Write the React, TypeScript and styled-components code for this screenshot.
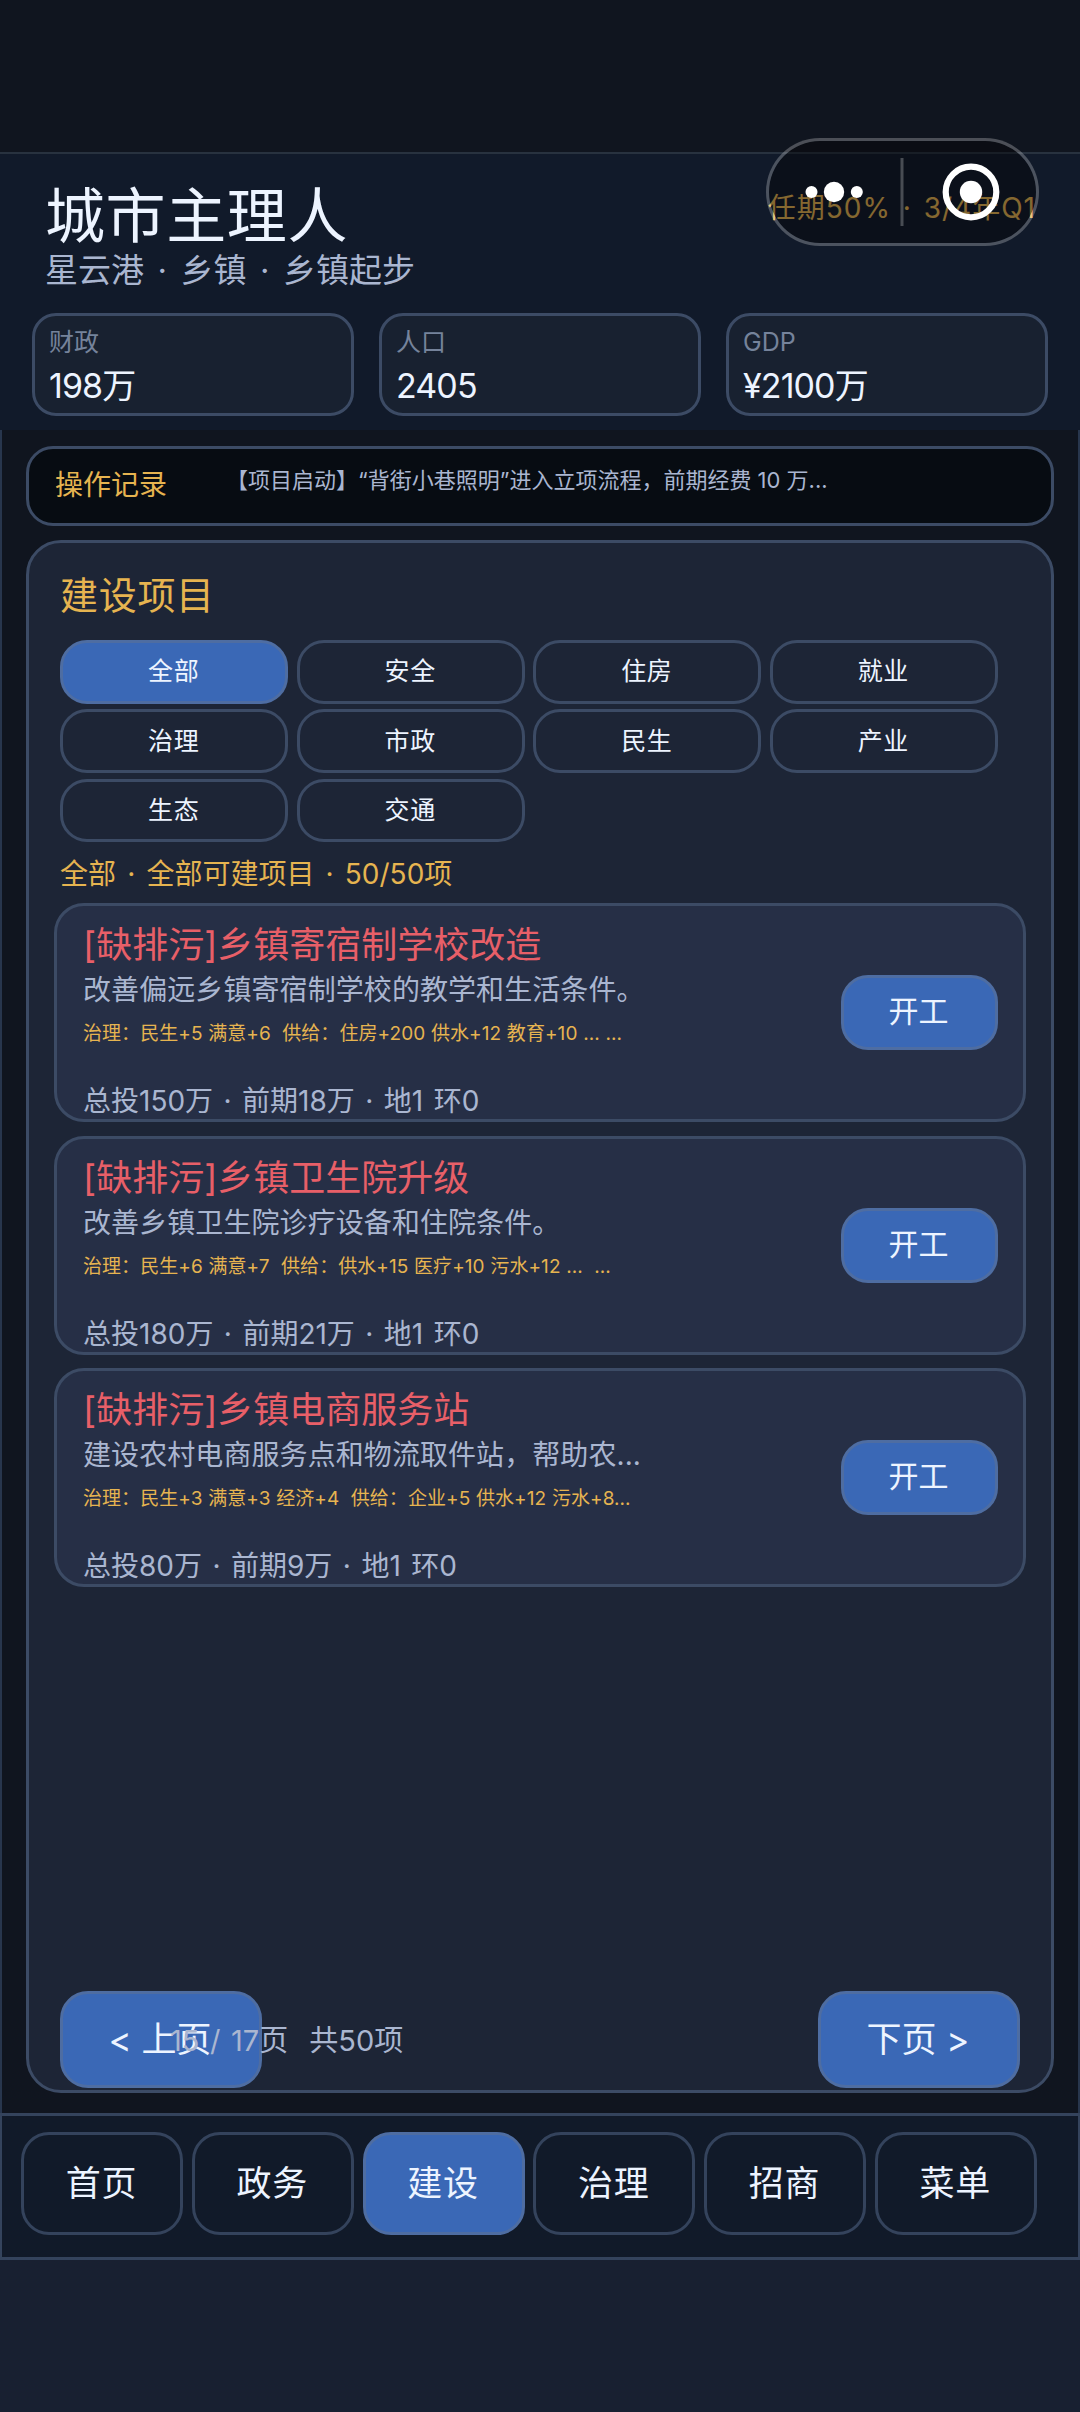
import React from 'react';
import styled, { createGlobalStyle } from 'styled-components';

const color = {
  line: '#3c4b65',
  faintLine: '#28323f',
  blueLine: '#4e6da2',
  gold: '#e6b450',
  text: '#edf4ff',
  soft: '#aab6d0',
  mute: '#75839b',
  red: '#e85f68',
  blue: '#3a68b6',
};

const GlobalStyle = createGlobalStyle`
  html, body { margin: 0; padding: 0; background: #182031; }
  *, *::before, *::after { box-sizing: border-box; }
  body, button { font-family: Inter, "Noto Sans CJK SC", sans-serif; font-weight: 400; }
  button { margin: 0; padding: 0; cursor: pointer; }
`;

const Screen = styled.div`
  position: relative;
  width: 1080px;
  height: 2412px;
  display: flex;
  flex-direction: column;
  overflow: hidden;
  background: #182031;
`;

const StatusArea = styled.div`
  flex: none;
  height: 152px;
  background: #10151f;
`;

const Header = styled.header`
  flex: none;
  height: 278px;
  border-top: 2px solid ${color.faintLine};
  background: #111a2a;
  padding: 31px 32px 0;
  display: flex;
  flex-direction: column;
`;

const HeaderTop = styled.div`
  display: flex;
  justify-content: space-between;
  height: 128px;
  padding: 0 12px 0 13px;
`;

const Text = styled.div<{ $size: number; $lh: number; $c?: string; $ls?: number; $ws?: number }>`
  font-size: ${p => p.$size}px;
  line-height: ${p => p.$lh}px;
  color: ${p => p.$c ?? color.text};
  letter-spacing: ${p => p.$ls ?? 0}px;
  word-spacing: ${p => p.$ws ?? 0}px;
  white-space: pre;
`;

const Heading = styled.div`
  display: flex;
  flex-direction: column;
  padding-top: 1px;
  gap: 6px;
`;

const Term = styled.div`
  padding-top: 7px;
`;

const Stats = styled.div`
  display: grid;
  grid-template-columns: repeat(3, 322px);
  justify-content: space-between;
`;

const StatCard = styled.div`
  height: 103px;
  border: 3px solid ${color.line};
  border-radius: 24px;
  background: #182130;
  padding: 13px 14px 0;
  display: flex;
  flex-direction: column;
  gap: 13px;
`;

const Capsule = styled.div`
  position: absolute;
  left: 766px;
  top: 138px;
  width: 273px;
  height: 108px;
  border-radius: 54px;
  border: 3px solid rgba(255, 255, 255, 0.25);
  background: rgba(4, 4, 8, 0.43);
  background-clip: padding-box;
  display: flex;
  align-items: center;
`;

const CapsuleIcons = styled.svg`
  display: block;
  width: 267px;
  height: 102px;
`;

const Body = styled.main`
  flex: none;
  height: 1683px;
  border: solid #28364d;
  border-width: 0 2px;
  background: #10151f;
  padding: 16px 24px 0;
  display: flex;
  flex-direction: column;
  gap: 14px;
`;

const LogBar = styled.section`
  flex: none;
  height: 80px;
  border: 3px solid ${color.line};
  border-radius: 27px;
  background: #070c12;
  padding: 0 27px 0 26px;
  display: flex;
  align-items: flex-start;
`;

const LogTitle = styled.div`
  width: 171px;
  padding-top: 20px;
`;

const LogText = styled.div`
  padding-top: 15px;
`;

const Panel = styled.section`
  flex: none;
  height: 1553px;
  border: 3px solid ${color.line};
  border-radius: 35px;
  background: #1d2536;
  padding: 30px 25px 2px;
  display: flex;
  flex-direction: column;
`;

const Inset = styled.div`
  padding: 0 6px;
`;

const Filters = styled.div`
  width: 938px;
  margin: 23px 6px 0;
  display: grid;
  grid-template-columns: repeat(4, 1fr);
  grid-auto-rows: 63.6px;
  gap: 5.7px 8.3px;
`;

const Pill = styled.button<{ $on?: boolean }>`
  border: 3px solid ${p => (p.$on ? color.blueLine : color.line)};
  border-radius: 27px;
  background: ${p => (p.$on ? color.blue : 'transparent')};
  color: ${color.text};
  font-size: 25px;
  letter-spacing: 0.6px;
  line-height: 36px;
  padding: 0 1px 1px 0;
`;

const Summary = styled.div`
  padding: 16px 6px 0;
  margin-bottom: 13px;
`;

const Cards = styled.div`
  display: flex;
  flex-direction: column;
  gap: 13.2px;
`;

const Card = styled.article`
  height: 219.3px;
  border: 3px solid ${color.line};
  border-radius: 30px;
  background: #262f46;
  padding: 20px 25px 0 26px;
  display: flex;
  justify-content: space-between;
`;

const CardInfo = styled.div`
  display: flex;
  flex-direction: column;
`;

const Gap = styled.div<{ $h: number }>`
  flex: none;
  height: ${p => p.$h}px;
`;

const StartButton = styled.button`
  width: 157px;
  height: 75px;
  margin-top: 49px;
  border: 3px solid ${color.blueLine};
  border-radius: 27px;
  background: ${color.blue};
  color: ${color.text};
  font-size: 30px;
  line-height: 40px;
  padding: 0 2px 3px 0;
`;

const Pager = styled.div`
  margin-top: auto;
  padding: 0 6px;
  height: 96.7px;
  display: flex;
  justify-content: space-between;
  position: relative;
`;

const PageButton = styled.button`
  width: 202px;
  height: 96.7px;
  border: 3px solid ${color.blueLine};
  border-radius: 28px;
  background: ${color.blue};
  color: ${color.text};
  font-size: 35px;
  line-height: 40px;
  padding: 0 2px 2px 0;
`;

const PageStatus = styled.div`
  position: absolute;
  left: 116px;
  top: 30px;
`;

const NavBar = styled.nav`
  flex: none;
  height: 147px;
  border: 2px solid #34435c;
  border-width: 3px 2px;
  background: #111a29;
  padding: 16px 19px 0;
  display: grid;
  grid-template-columns: repeat(6, 162px);
  column-gap: 8.75px;
`;

const NavItem = styled.button<{ $on?: boolean }>`
  height: 103px;
  border: 3px solid ${p => (p.$on ? color.blueLine : '#34435c')};
  border-radius: 28px;
  background: ${p => (p.$on ? color.blue : 'transparent')};
  color: ${color.text};
  font-size: 35px;
  letter-spacing: 0.8px;
  line-height: 44px;
  padding: 0 1px 1px 0;
`;

const stats = [
  { label: '财政', value: '198万' },
  { label: '人口', value: '2405' },
  { label: 'GDP', value: '¥2100万' },
];

const filters = ['全部', '安全', '住房', '就业', '治理', '市政', '民生', '产业', '生态', '交通'];

const projects = [
  {
    name: '[缺排污]乡镇寄宿制学校改造',
    desc: '改善偏远乡镇寄宿制学校的教学和生活条件。',
    effect: '治理：民生+5 满意+6  供给：住房+200 供水+12 教育+10 ... ...',
    cost: '总投150万 · 前期18万 · 地1 环0',
  },
  {
    name: '[缺排污]乡镇卫生院升级',
    desc: '改善乡镇卫生院诊疗设备和住院条件。',
    effect: '治理：民生+6 满意+7  供给：供水+15 医疗+10 污水+12 ...  ...',
    cost: '总投180万 · 前期21万 · 地1 环0',
  },
  {
    name: '[缺排污]乡镇电商服务站',
    desc: '建设农村电商服务点和物流取件站，帮助农...',
    effect: '治理：民生+3 满意+3 经济+4  供给：企业+5 供水+12 污水+8...',
    cost: '总投80万 · 前期9万 · 地1 环0',
  },
];

const tabs = ['首页', '政务', '建设', '治理', '招商', '菜单'];

export default function App() {
  return (
    <Screen lang="zh-CN">
      <GlobalStyle />
      <StatusArea />
      <Header>
        <HeaderTop>
          <Heading>
            <Text $size={60} $lh={60} $ls={0.6}>城市主理人</Text>
            <Text $size={33} $lh={36} $c={color.soft} $ws={4.2}>星云港 · 乡镇 · 乡镇起步</Text>
          </Heading>
          <Term>
            <Text $size={28} $lh={32} $c={color.gold} $ls={1} $ws={3}>任期50% · 3/4年Q1</Text>
          </Term>
        </HeaderTop>
        <Stats>
          {stats.map(s => (
            <StatCard key={s.label}>
              <Text $size={25} $lh={26} $c={color.mute}>{s.label}</Text>
              <Text $size={34} $lh={36} $ls={-0.9}>{s.value}</Text>
            </StatCard>
          ))}
        </Stats>
      </Header>

      <Body>
        <LogBar>
          <LogTitle>
            <Text $size={28} $lh={32} $c={color.gold}>操作记录</Text>
          </LogTitle>
          <LogText>
            <Text $size={22} $lh={32} $c={color.soft}>
              【项目启动】“背街小巷照明”进入立项流程，前期经费 10 万...
            </Text>
          </LogText>
        </LogBar>

        <Panel>
          <Inset>
            <Text $size={38} $lh={44} $c={color.gold} $ls={0.7}>建设项目</Text>
          </Inset>
          <Filters>
            {filters.map((f, i) => (
              <Pill key={f} $on={i === 0}>{f}</Pill>
            ))}
          </Filters>
          <Summary>
            <Text $size={28} $lh={32} $c={color.gold} $ws={3.3}>全部 · 全部可建项目 · 50/50项</Text>
          </Summary>
          <Cards>
            {projects.map(p => (
              <Card key={p.name}>
                <CardInfo>
                  <Text $size={36} $lh={38} $c={color.red}>{p.name}</Text>
                  <Gap $h={10} />
                  <Text $size={28} $lh={32} $c={color.soft} $ls={0.08}>{p.desc}</Text>
                  <Gap $h={15} />
                  <Text $size={19} $lh={26} $c={color.gold} $ls={0.06} $ws={0.3}>{p.effect}</Text>
                  <Gap $h={38} />
                  <Text $size={28} $lh={32} $c={color.soft} $ws={2.6}>{p.cost}</Text>
                </CardInfo>
                <StartButton>开工</StartButton>
              </Card>
            ))}
          </Cards>
          <Pager>
            <PageButton>&lt; 上页</PageButton>
            <PageButton>下页 &gt;</PageButton>
            <PageStatus>
              <Text $size={29} $lh={40} $c={color.soft} $ws={2.4}>15 / 17页  共50项</Text>
            </PageStatus>
          </Pager>
        </Panel>
      </Body>

      <NavBar>
        {tabs.map(t => (
          <NavItem key={t} $on={t === '建设'}>{t}</NavItem>
        ))}
      </NavBar>

      <Capsule>
        <CapsuleIcons viewBox="0 0 267 102" fill="#fff">
          <circle cx="42.5" cy="51" r="6" />
          <circle cx="65" cy="51" r="10.2" />
          <circle cx="87.8" cy="51" r="6" />
          <rect x="131.5" y="17" width="3" height="68" fill="rgba(255,255,255,0.25)" />
          <circle cx="202" cy="51" r="25.3" fill="none" stroke="#fff" strokeWidth="6.2" />
          <circle cx="202" cy="51" r="11.2" />
        </CapsuleIcons>
      </Capsule>
    </Screen>
  );
}
